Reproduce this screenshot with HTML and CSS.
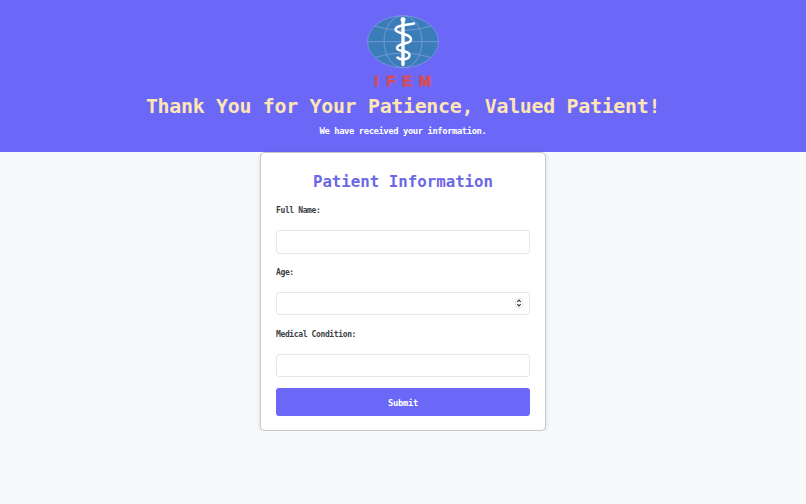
FILE: index.html
```
<!DOCTYPE html>
<html lang="en">
<head>
    <meta charset="UTF-8">
    <meta name="viewport" content="width=device-width, initial-scale=1.0">
    <title>Patient Information</title>
    <link rel="stylesheet" href="styles.css">
</head>
<body>
    <header class="header">
        <svg class="logo" width="74" height="76" viewBox="0 0 74 76">
            <ellipse cx="37" cy="27.700" rx="35.500" ry="26" fill="#3b7db8" stroke="#8095e6" stroke-width="0.8"/>
            <g fill="none" stroke="#7d9fdc" stroke-width="0.8">
                <ellipse cx="37" cy="27.700" rx="19" ry="26"/>
                <path d="M1.300 27.700H72.700M9 12Q37 21 65 12M9 43.500Q37 34.500 65 43.500"/>
            </g>
            <g fill="none" stroke="#fff" stroke-linecap="round">
                <path d="M37 6V50.500" stroke-width="3.400"/>
                <path d="M48 9.500C42 11 29.500 11 29.500 15.500C29.500 20 45 19 45 25.500C45 31 31 28.500 31 34C31 38.500 43.500 35.500 43.500 41C43.500 46 35 46.500 31.500 43.500" stroke-width="2.500"/>
            </g>
            <circle cx="37" cy="5.500" r="2.500" fill="#fff"/>
            <g class="logo-text">
                <text x="10.500" y="72" text-anchor="middle">I</text>
                <text x="25" y="72" text-anchor="middle">F</text>
                <text x="41" y="72" text-anchor="middle">E</text>
                <text x="59" y="72" text-anchor="middle">M</text>
            </g>
        </svg>
        <h1>Thank You for Your Patience, Valued Patient!</h1>
        <p>We have received your information.</p>
    </header>

    <form class="container" id="patientForm">
        <h2>Patient Information</h2>
        <div class="form-group">
            <label for="name">Full Name:</label>
            <input type="text" id="name" name="name" required>
        </div>
        <div class="form-group">
            <label for="age">Age:</label>
            <div class="number-field">
                <input type="text" inputmode="numeric" id="age" name="age" required>
                <svg class="spinner" width="8" height="10" viewBox="0 0 8 10">
                    <rect x="0.500" y="0.500" width="7" height="9" rx="2.500" fill="#fff" stroke="#dcdcdc" stroke-width="0.7"/>
                    <path d="M2.300 3.800L4 2.100L5.700 3.800M2.300 6.200L4 7.900L5.700 6.200" fill="none" stroke="#333" stroke-width="1.100"/>
                </svg>
            </div>
        </div>
        <div class="form-group">
            <label for="condition">Medical Condition:</label>
            <input type="text" id="condition" name="condition" required>
        </div>
        <button type="submit">Submit</button>
    </form>
</body>
</html>
```
FILE: styles.css
```
* {
    box-sizing: border-box;
}
body {
    font-family: "DejaVu Sans Mono", monospace;
    margin: 0;
    background-color: #f8f9fb;
    color: #3c3f45;
}
.header {
    height: 152px;
    padding-top: 14px;
    background-color: #6b68f8;
    text-align: center;
}
.logo {
    display: block;
    margin: 0 auto;
}
.logo-text {
    font: bold 14.500px "Liberation Sans", Arial, sans-serif;
    fill: #d14d5c;
    stroke: #d14d5c;
    stroke-width: 0.9px;
}
.header h1 {
    margin: 5px 0 0;
    font-size: 19.900px;
    letter-spacing: -0.29px;
    line-height: 24px;
    color: #ffe5b4;
}
.header p {
    margin: 6px 0 0;
    font-size: 8.800px;
    font-weight: bold;
    letter-spacing: -0.39px;
    line-height: 12px;
    color: #fff;
}
.container {
    width: 286px;
    height: 279px;
    margin: 0 auto;
    padding: 18px 15px 0;
    background-color: #fff;
    border: 1px solid #c6c8ce;
    border-radius: 5px;
    box-shadow: 0 1px 5px rgba(0, 0, 0, 0.12);
}
.container h2 {
    margin: 0 0 12px;
    font-size: 15.750px;
    line-height: 22px;
    text-align: center;
    color: #6b68e4;
}
.form-group {
    height: 61.800px;
}
.form-group label {
    display: block;
    margin-bottom: 13px;
    font-size: 8px;
    font-weight: bold;
    letter-spacing: -0.37px;
    line-height: 12px;
}
.form-group input {
    display: block;
    width: 100%;
    height: 23.500px;
    padding: 4px 6px;
    background-color: #fff;
    border: 1px solid #e6e7e9;
    border-radius: 3px;
    font: 8px "DejaVu Sans Mono", monospace;
}
.number-field {
    position: relative;
}
.spinner {
    position: absolute;
    top: 6px;
    right: 7px;
}
button {
    display: block;
    width: 100%;
    height: 27.500px;
    margin-top: -2px;
    padding: 2px 0 0;
    background-color: #6b68f8;
    border: none;
    border-radius: 3px;
    font: bold 8.800px "DejaVu Sans Mono", monospace;
    letter-spacing: -0.3px;
    color: #fff;
}
```
